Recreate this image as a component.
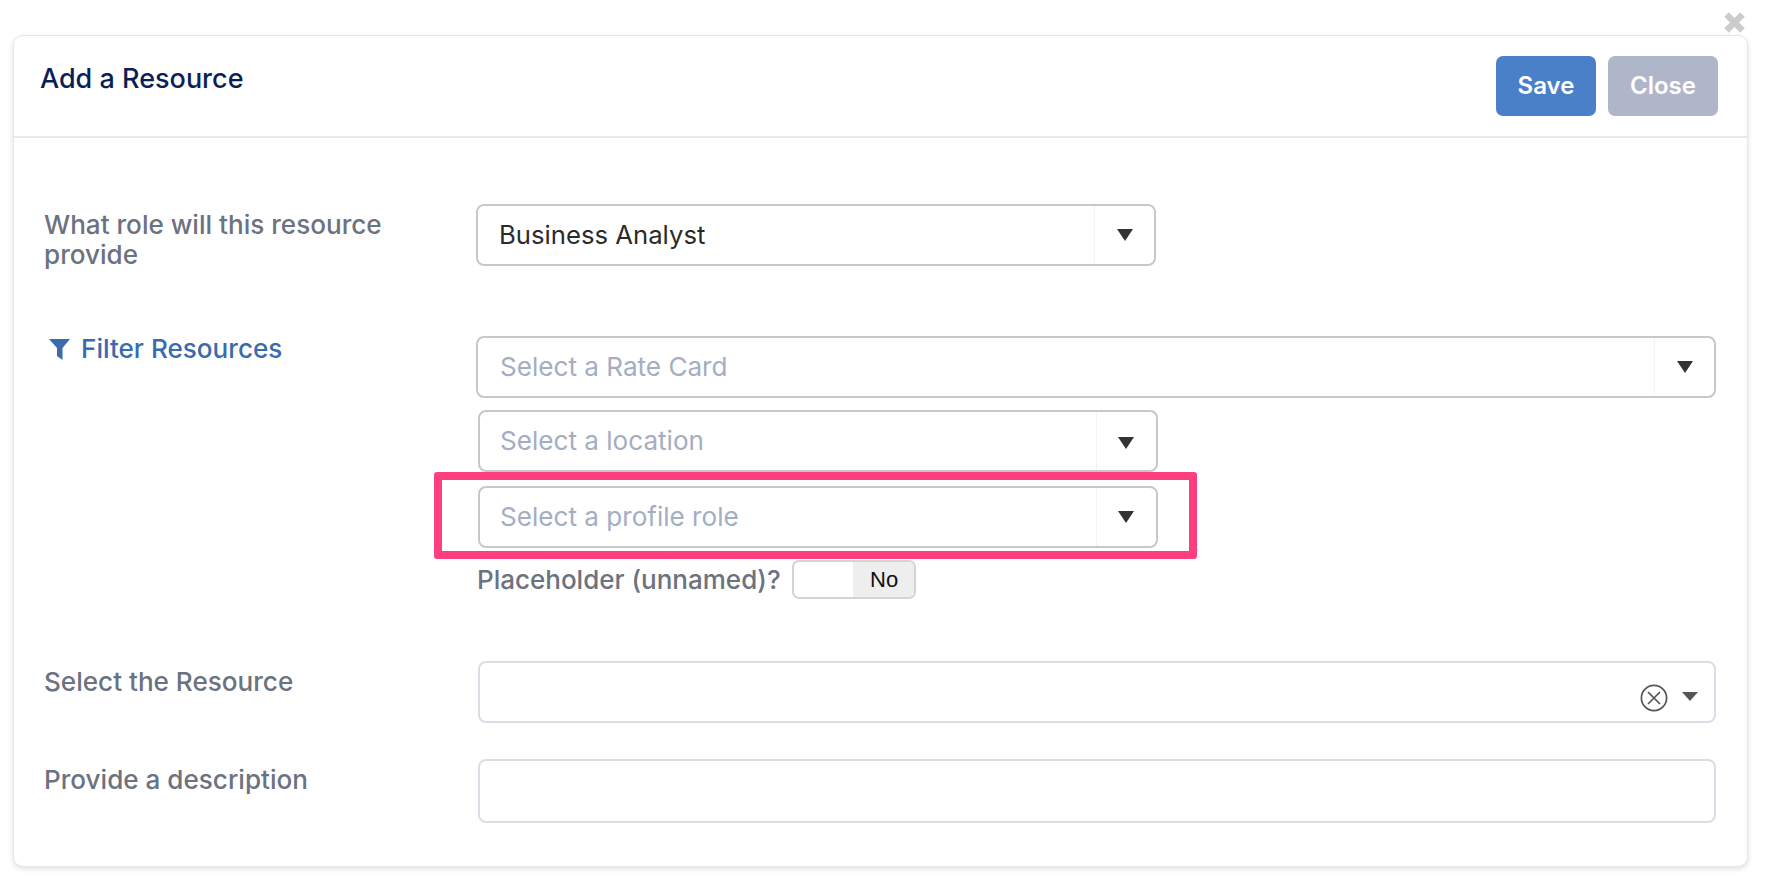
<div class="page">
  <svg class="dismiss" viewBox="0 0 21 21" aria-hidden="true"><path d="M2.5 2.5 L18.5 18.5 M18.5 2.5 L2.5 18.5" /></svg>
  <section class="card">
    <header class="head">
      <h1>Add a Resource</h1>
      <div class="actions">
        <button class="btn save">Save</button>
        <button class="btn close">Close</button>
      </div>
    </header>
    <div class="body">
      <div class="row role">
        <div class="label">What role will this resource provide</div>
        <div class="select w-short"><span class="value">Business Analyst</span><span class="caret"><i></i></span></div>
      </div>
      <div class="row filter">
        <div class="label link">
          <svg viewBox="0 0 21 21" aria-hidden="true"><path d="M0 0 H21 L13.5 9 V21 L8 17 V9 Z" /></svg>
          Filter Resources
        </div>
        <div class="stack">
          <div class="select"><span class="ph rate">Select a Rate Card</span><span class="caret"><i></i></span></div>
          <div class="select w-short indent"><span class="ph">Select a location</span><span class="caret left low"><i></i></span></div>
          <div class="highlight">
            <div class="select w-short"><span class="ph">Select a profile role</span><span class="caret left"><i></i></span></div>
          </div>
          <div class="placeholder">
            <span>Placeholder (unnamed)?</span>
            <div class="toggle"><span class="off"></span><span class="no">No</span></div>
          </div>
        </div>
      </div>
      <div class="row resource">
        <div class="label">Select the Resource</div>
        <div class="select light indent">
          <svg class="clear" viewBox="0 0 28 28" aria-hidden="true"><circle cx="14" cy="14" r="12.6" /><path d="M8 8 L20 20 M20 8 L8 20" /></svg>
          <i class="mini"></i>
        </div>
      </div>
      <div class="row desc">
        <div class="label">Provide a description</div>
        <div class="select light indent tall"></div>
      </div>
    </div>
  </section>
</div>

<style>
  :global(body) { margin: 0; background: #fff; }
  .page {
    position: relative;
    width: 1770px;
    height: 890px;
    box-sizing: border-box;
    padding: 35px 22px 0 13px;
    font-family: Inter, "Liberation Sans", sans-serif;
    overflow: hidden;
  }
  .dismiss { position: absolute; left: 1724px; top: 12px; width: 21px; height: 21px; }
  .dismiss path { stroke: #cccccc; stroke-width: 6.5; fill: none; }
  .card {
    height: 832px;
    box-sizing: border-box;
    border: 1px solid #e6e8ee;
    border-radius: 10px;
    box-shadow: 0 2px 5px rgba(60, 70, 90, 0.18);
    background: #fff;
  }
  .head {
    height: 102px;
    box-sizing: border-box;
    border-bottom: 2px solid #e8e9ef;
    display: flex;
    justify-content: space-between;
    align-items: flex-start;
    padding: 20px 29px 0 26px;
  }
  h1 { margin: 7px 0 0; font-size: 27px; font-weight: 500; line-height: 32px; color: #0c1f55; }
  .actions { display: flex; gap: 12px; }
  .btn {
    border: 0;
    height: 60px;
    border-radius: 7px;
    padding: 0 0 2px;
    font: 600 24px Inter, sans-serif;
    color: #fff;
  }
  .save { width: 100px; background: #4a80c8; }
  .close { width: 110px; background: #b0b6ca; }
  .body { padding: 66px 31px 0 30px; }
  .row { display: flex; }
  .label {
    width: 432px;
    flex: none;
    font-size: 26.1px;
    font-weight: 500;
    line-height: 30px;
    color: #6b7280;
  }
  .role .label { width: 340px; margin-right: 92px; padding-top: 6px; }
  .link { color: #3a6bad; display: flex; gap: 11px; align-items: center; height: 30px; padding: 0 0 0 5px; width: 427px; margin-top: -2px; }
  .link svg { width: 21px; height: 21px; fill: #3a6bad; margin-top: 1px; }
  .filter { margin-top: 66px; }
  .stack { flex: 1; min-width: 0; display: flex; flex-direction: column; }
  .select {
    height: 62px;
    box-sizing: border-box;
    border: 2px solid #c8c8c8;
    border-radius: 8px;
    display: flex;
    align-items: center;
    justify-content: space-between;
    font-size: 26.1px;
    background: #fff;
  }
  .row > .select { flex: 1; }
  .w-short { width: 680px; }
  .row > .select.w-short { flex: none; }
  .indent { margin-left: 2px; }
  .value { padding: 0 0 2px 21px; color: #2b2b2b; font-size: 25.7px; }
  .ph { padding: 0 0 1px 21px; color: #a3aec2; }
  .w-short .ph { padding-left: 20px; }
  .ph.rate { padding-left: 22px; }
  .caret {
    width: 59px;
    height: 100%;
    border-left: 1px solid #f3f3f3;
    display: flex;
    align-items: center;
    justify-content: center;
  }
  .caret i {
    width: 0;
    height: 0;
    margin-left: 1px;
    border-left: 8px solid transparent;
    border-right: 8px solid transparent;
    border-top: 12px solid #333;
  }
  .caret.left i { margin-left: -2px; }
  .caret.low i { margin-top: 4px; }
  .stack > .select { flex: none; }
  .stack > .select + .select { margin-top: 12px; }
  .highlight {
    margin-left: -42px;
    width: 762.5px;
    height: 87px;
    box-sizing: border-box;
    border: 8px solid #fd3f81;
    border-radius: 3px;
    padding: 6px 0 0 36px;
  }
  .placeholder { margin: 1px 0 0 1px; display: flex; align-items: center; gap: 11px; font-size: 26px; font-weight: 500; color: #6b7280; }
  .toggle {
    width: 124px;
    height: 39px;
    box-sizing: border-box;
    border: 2px solid #d4d4d4;
    border-radius: 7px;
    display: flex;
    overflow: hidden;
  }
  .off { width: 59px; }
  .no { flex: 1; background: #eeeeee; color: #111; font-family: "Liberation Sans", sans-serif; font-size: 22px; font-weight: 400; display: flex; align-items: center; justify-content: center; padding-left: 2px; }
  .resource { margin-top: 62px; }
  .resource .label { padding-top: 6px; }
  .desc { margin-top: 36px; }
  .desc .label { padding-top: 6px; }
  .light { border-color: #dadde6; justify-content: flex-end; }
  .tall { height: 64px; }
  .clear { width: 28px; height: 28px; margin: 11px 14px 0 0; }
  .clear circle, .clear path { fill: none; stroke: #555; stroke-width: 1.7; }
  .mini {
    width: 0; height: 0;
    border-left: 8px solid transparent;
    border-right: 8px solid transparent;
    border-top: 9px solid #555;
    margin: 9px 16px 0 0;
  }
</style>
